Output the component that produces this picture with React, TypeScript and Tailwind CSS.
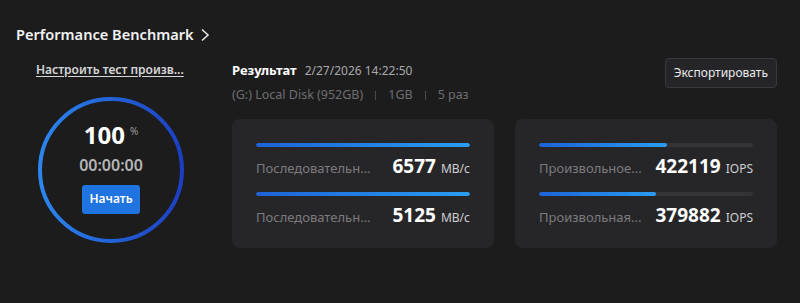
import React from 'react';

const seq = [
  { label: 'Последовательн...', value: '6577', unit: 'MB/с', pct: 100 },
  { label: 'Последовательн...', value: '5125', unit: 'MB/с', pct: 100 },
];

const rnd = [
  { label: 'Произвольное...', value: '422119', unit: 'IOPS', pct: 60 },
  { label: 'Произвольная...', value: '379882', unit: 'IOPS', pct: 54.5 },
];

type Row = { label: string; value: string; unit: string; pct: number };

const ResultCard: React.FC<{ rows: Row[] }> = ({ rows }) => (
  <div className="flex-1 rounded-lg bg-[#262628] px-6 pt-[24px] pb-[24px] flex flex-col gap-[12px]">
    {rows.map((r, i) => (
      <div key={i} className="flex flex-col">
        <div className="h-[4px] rounded-full bg-[#343437] overflow-hidden">
          <div
            className="h-full rounded-full bg-gradient-to-r from-[#1e63d8] to-[#2b9cf0]"
            style={{ width: `${r.pct}%` }}
          />
        </div>
        <div className="flex items-baseline justify-between mt-[5px] h-[28px]">
          <span className="text-[13px] text-[#7b7b7e]">{r.label}</span>
          <span className="flex items-baseline gap-[5px]">
            <span className="text-[19px] font-bold text-white">{r.value}</span>
            <span className="text-[12px] text-[#cfcfd2]">{r.unit}</span>
          </span>
        </div>
      </div>
    ))}
  </div>
);

export default function App() {
  return (
    <div
      className="w-[800px] h-[303px] bg-[#1c1c1d] text-white overflow-hidden"
      style={{ fontFamily: '"Noto Sans", "Open Sans", sans-serif' }}
    >
      <div className="pl-4 pt-[24px] flex items-center gap-[6px]">
        <span className="text-[14.6px] font-semibold text-[#f2f2f2]">Performance Benchmark</span>
        <svg width="10" height="14" viewBox="0 0 10 14" fill="none" stroke="#e6e6e6" strokeWidth="1.6">
          <polyline points="2,1.5 8,7 2,12.5" />
        </svg>
      </div>

      <div className="flex mt-[15px]">
        {/* left column */}
        <div className="w-[232px] shrink-0 flex flex-col items-start">
          <a className="ml-[36px] text-[12px] font-semibold text-[#d6d6d8] underline underline-offset-2">
            Настроить тест произв...
          </a>
          <div className="ml-[38px] mt-[18px] relative w-[146px] h-[146px]">
            <svg width="146" height="146" viewBox="0 0 146 146" className="absolute inset-0">
              <defs>
                <linearGradient id="ring" x1="0" y1="0" x2="1" y2="0">
                  <stop offset="0" stopColor="#2b86ee" />
                  <stop offset="1" stopColor="#1c3fc2" />
                </linearGradient>
              </defs>
              <circle cx="73" cy="73" r="71" fill="none" stroke="url(#ring)" strokeWidth="4" />
            </svg>
            <div className="relative flex flex-col items-center pt-[22px]">
              <div className="flex items-start">
                <span className="text-[24px] font-bold leading-[32px] text-white">100</span>
                <span className="text-[10px] text-[#9a9a9c] ml-[5px] mt-[5px]">%</span>
              </div>
              <span className="text-[16px] font-semibold text-[#b5b5b7] mt-[2px]">00:00:00</span>
              <button className="mt-[8px] bg-[#1f74e0] rounded-[3px] w-[58px] h-[29px] text-[12px] font-semibold text-white">
                Начать
              </button>
            </div>
          </div>
        </div>

        {/* right column */}
        <div className="flex-1 pr-[23px] flex flex-col">
          <div className="flex justify-between items-start">
            <div className="flex flex-col">
              <div className="flex items-baseline gap-[8px]">
                <span className="text-[13px] font-bold text-white">Результат</span>
                <span className="text-[12px] text-[#a9a9ab]">2/27/2026 14:22:50</span>
              </div>
              <div className="flex items-center text-[12.5px] text-[#6e6e71] mt-[6px]">
                <span>(G:) Local Disk (952GB)</span>
                <span className="mx-[12px] h-[9px] w-px bg-[#4a4a4d]" />
                <span>1GB</span>
                <span className="mx-[12px] h-[9px] w-px bg-[#4a4a4d]" />
                <span>5 раз</span>
              </div>
            </div>
            <button className="mt-[-3px] h-[30px] px-[8px] rounded-[4px] bg-[#252527] border border-[#39393c] text-[12px] text-[#ececee]">
              Экспортировать
            </button>
          </div>
          <div className="flex gap-[21px] mt-[14px] h-[129px]">
            <ResultCard rows={seq} />
            <ResultCard rows={rnd} />
          </div>
        </div>
      </div>
    </div>
  );
}
